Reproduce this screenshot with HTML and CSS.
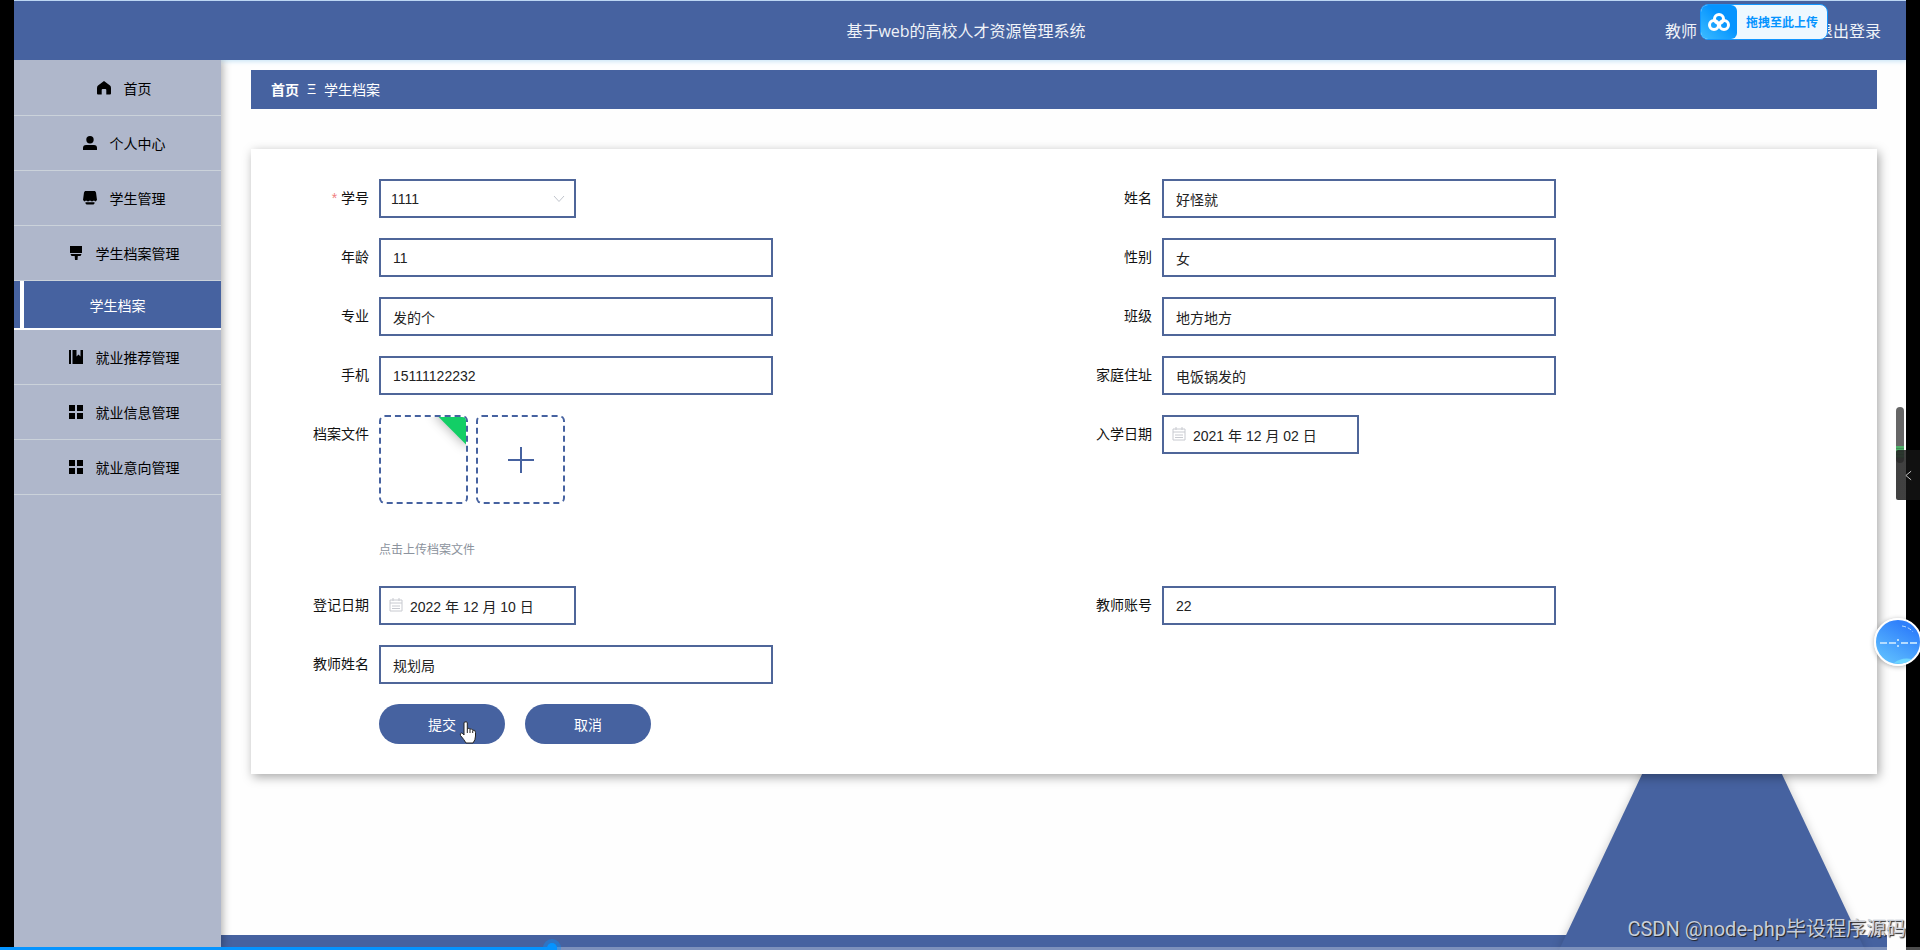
FILE: index.html
```html
<!DOCTYPE html>
<html lang="zh-CN">
	<head>
		<meta charset="UTF-8" />
		<meta name="viewport" content="width=device-width, initial-scale=1.0" />
		<title>基于web的高校人才资源管理系统</title>
		<link rel="stylesheet" href="styles.css">
	</head>
	<body>
		<div class="app">
			<header class="header">
				<h1 class="title">基于web的高校人才资源管理系统</h1>
				<div class="user">
					<span>教师</span>
					<a href="#">退出登录</a>
				</div>
			</header>

			<div class="body">
				<nav class="sidebar">
					<a class="item" href="#">
						<svg class="icon" viewBox="0 0 14 14"><path d="M7 0 L13 4.6 Q14 5.5 14 7 V12.5 Q14 13.5 13 13.5 H9.3 V9 Q9.3 8 8.3 8 H5.7 Q4.7 8 4.7 9 V13.5 H1 Q0 13.5 0 12.5 V7 Q0 5.5 1 4.6 Z" /></svg>
						首页
					</a>
					<a class="item" href="#">
						<svg class="icon" viewBox="0 0 14 14"><circle cx="7" cy="3.7" r="3.7" /><path d="M0 14 V12 Q0 9 3 9 H11 Q14 9 14 12 V14 Z" /></svg>
						个人中心
					</a>
					<a class="item" href="#">
						<svg class="icon" viewBox="0 0 14 14"><path d="M2 0 H12 L13 1.5 L14 9 L12.5 10.500 L11 9.500 L9 10.500 L7 9.500 L5 10.500 L3 9.500 L1.5 10.500 L0 9 L1 1.5 Z M2.500 11.3 H11.500 V12.500 L10.5 13.5 H3.5 L2.500 12.500 Z" /></svg>
						学生管理
					</a>
					<a class="item" href="#">
						<svg class="icon" viewBox="0 0 14 14"><path d="M1 0 H13 V7 H1 Z M1.5 8 H12.5 L11.5 10 H8.8 L8.5 14 H6 L5.7 10 H2.5 Z" /></svg>
						学生档案管理
					</a>
					<a class="subitem" href="#">学生档案</a>
					<a class="item" href="#">
						<svg class="icon" viewBox="0 0 14 14"><path d="M0 0 H2 V14 H0 Z M3.5 0 H7.5 V6.5 L9.5 4.5 L11.5 6.5 V0 H14 V14 H3.5 Z" /></svg>
						就业推荐管理
					</a>
					<a class="item" href="#">
						<svg class="icon" viewBox="0 0 14 14"><path d="M0 0 H6 V6 H0 Z M8 0 H14 V6 H8 Z M0 8 H6 V14 H0 Z M8 8 H14 V14 H8 Z" /></svg>
						就业信息管理
					</a>
					<a class="item" href="#">
						<svg class="icon" viewBox="0 0 14 14"><path d="M0 0 H6 V6 H0 Z M8 0 H14 V6 H8 Z M0 8 H6 V14 H0 Z M8 8 H14 V14 H8 Z" /></svg>
						就业意向管理
					</a>
				</nav>

				<main class="main">
					<div class="breadcrumb">
						<a href="#">首页</a>
						<span>Ξ</span>
						<span>学生档案</span>
					</div>

					<form class="card">
						<div class="field">
							<label for="xuehao"><span class="required">*</span> 学号</label>
							<div class="control short">
								<select id="xuehao" name="xuehao">
									<option>1111</option>
								</select>
								<svg class="arrow" viewBox="0 0 12 8"><path d="M1 1 L6 6.5 L11 1" /></svg>
							</div>
						</div>
						<div class="field">
							<label for="xingming">姓名</label>
							<div class="control"><input type="text" id="xingming" value="好怪就" /></div>
						</div>
						<div class="field">
							<label for="nianling">年龄</label>
							<div class="control"><input type="text" id="nianling" value="11" /></div>
						</div>
						<div class="field">
							<label for="xingbie">性别</label>
							<div class="control"><input type="text" id="xingbie" value="女" /></div>
						</div>
						<div class="field">
							<label for="zhuanye">专业</label>
							<div class="control"><input type="text" id="zhuanye" value="发的个" /></div>
						</div>
						<div class="field">
							<label for="banji">班级</label>
							<div class="control"><input type="text" id="banji" value="地方地方" /></div>
						</div>
						<div class="field">
							<label for="shouji">手机</label>
							<div class="control"><input type="text" id="shouji" value="15111122232" /></div>
						</div>
						<div class="field">
							<label for="zhuzhi">家庭住址</label>
							<div class="control"><input type="text" id="zhuzhi" value="电饭锅发的" /></div>
						</div>
						<div class="field">
							<label for="wenjian">档案文件</label>
							<div class="upload">
								<div class="tiles">
									<div class="tile"><span class="done"></span></div>
									<button type="button" class="tile" id="wenjian" aria-label="上传">
										<svg class="plus" viewBox="0 0 26 26"><path d="M13 0 V26 M0 13 H26" /></svg>
									</button>
								</div>
								<p class="hint">点击上传档案文件</p>
							</div>
						</div>
						<div class="field">
							<label for="ruxue">入学日期</label>
							<div class="control short">
								<svg class="calendar" viewBox="0 0 14 14"><path d="M1 2 H13 V13 H1 Z M1 5 H13 M4 0 V3 M10 0 V3 M3 8 H11 M3 10.5 H11" /></svg>
								<input type="text" class="date" id="ruxue" value="2021 年 12 月 02 日" />
							</div>
						</div>
						<div class="field">
							<label for="dengji">登记日期</label>
							<div class="control short">
								<svg class="calendar" viewBox="0 0 14 14"><path d="M1 2 H13 V13 H1 Z M1 5 H13 M4 0 V3 M10 0 V3 M3 8 H11 M3 10.5 H11" /></svg>
								<input type="text" class="date" id="dengji" value="2022 年 12 月 10 日" />
							</div>
						</div>
						<div class="field">
							<label for="zhanghao">教师账号</label>
							<div class="control"><input type="text" id="zhanghao" value="22" /></div>
						</div>
						<div class="field">
							<label for="jiaoshi">教师姓名</label>
							<div class="control"><input type="text" id="jiaoshi" value="规划局" /></div>
						</div>
						<div class="actions">
							<button type="button" class="btn">
								提交
								<svg class="pointer" viewBox="0 0 18 23"><path d="M6 1 Q8 0 8.3 2 V8 Q10 6.500 11 8.200 Q13 7.200 13.700 9.200 Q16.500 8.500 16.500 11.500 V15 Q16.500 19 14 22 H7 Q5 18.500 1.500 14.500 Q0.500 12.500 2.500 12 Q4 12.200 5 14 V2 Q5 1 6 1 Z" /><path d="M8.300 8 V12 M11 8.500 V12 M13.700 9.500 V12" /></svg>
							</button>
							<button type="button" class="btn">取消</button>
						</div>
					</form>

					<footer class="footer">
						<svg class="triangle" viewBox="0 0 306 324"><path d="M153 0 L306 324 H0 Z" /></svg>
					</footer>
				</main>
			</div>
		</div>

		<!-- floating widgets -->
		<div class="drop-upload">
			<span class="drop-icon">
				<svg viewBox="0 0 22 18"><circle cx="11" cy="6" r="4.500" /><circle cx="6" cy="12" r="4.500" /><circle cx="16" cy="12" r="4.500" /></svg>
			</span>
			<span class="drop-text">拖拽至此上传</span>
		</div>
		<div class="meter"><span></span></div>
		<button type="button" class="drawer" aria-label="展开">
			<svg viewBox="0 0 8 12"><path d="M7 1 L1 6 L7 11" /></svg>
		</button>
		<div class="ball">
			<svg viewBox="0 0 44 44"><path class="dash" d="M4 23 H11 M13 23 H20 M25 23 H32 M34 23 H41" /><path class="dots" d="M21 20 H23 M21 26 H23" /><path class="shine" d="M26 6 Q33 7 37 12" /><path class="wave" d="M18 43 Q25 37 36 39 Q29 45 18 43 Z" /></svg>
		</div>
		<div class="watermark">CSDN @node-php毕设程序源码</div>
		<div class="progress"><div class="played"></div></div>
	</body>
</html>
```

FILE: styles.css
```css
* {
	box-sizing: border-box;
}

body {
	margin: 0;
	padding: 0 14px;
	background-color: #000;
	color: #111;
	font-family: "Liberation Sans", "Noto Sans CJK SC", sans-serif;
	font-size: 14px;
	overflow: hidden;
}

a {
	color: inherit;
	text-decoration: none;
}

.app {
	display: flex;
	flex-direction: column;
	min-height: 100vh;
	background-color: #fefefe;
	overflow: hidden;
}

.header {
	display: grid;
	grid-template-columns: 1fr auto 1fr;
	align-items: center;
	height: 60px;
	padding: 0 25px 2px 37px;
	border-top: 1px solid #bcd6f3;
	background-color: #4662a0;
	box-shadow: 0 1px 5px #bfe0f5;
	color: #f0f3f8;
	font-family: "Open Sans", "Noto Sans CJK SC", sans-serif;
	font-size: 16px;
}

.title {
	grid-column: 2;
	margin: 0;
	font-size: 16px;
	font-weight: normal;
}

.user {
	display: flex;
	justify-content: flex-end;
	gap: 120px;
}

.body {
	display: flex;
	flex: 1;
}

.sidebar {
	position: relative;
	z-index: 1;
	flex: none;
	width: 207px;
	padding-top: 1px;
	background-color: #afb7cb;
	box-shadow: 2px 0 8px rgba(0, 0, 0, 0.3);
	clip-path: inset(0 -12px 0 0);
}

.item {
	display: flex;
	align-items: center;
	justify-content: center;
	height: 55px;
	border-bottom: 1px solid #cbd2da;
	color: #000;
}

.icon {
	width: 14px;
	height: 14px;
	margin: 0 13px;
}

.subitem {
	display: flex;
	align-items: center;
	justify-content: center;
	position: relative;
	height: 49px;
	border-bottom: 2px solid #fff;
	background-color: #4662a0;
	color: #fff;
}

.subitem::before {
	content: "";
	position: absolute;
	top: 0;
	bottom: 0;
	left: 6px;
	width: 4px;
	background-color: #fff;
}

.main {
	display: flex;
	flex-direction: column;
	flex: 1;
	padding-top: 10px;
}

.breadcrumb {
	display: flex;
	align-items: center;
	gap: 8px;
	height: 39px;
	margin: 0 29px 40px 30px;
	padding: 0 20px 2px;
	background-color: #4662a0;
	color: #fff;
}

.breadcrumb a {
	font-weight: bold;
}

.card {
	position: relative;
	z-index: 1;
	display: grid;
	grid-template-columns: 1fr 1fr;
	row-gap: 20px;
	margin: 0 29px 0 30px;
	padding: 30px;
	background-color: #fff;
	box-shadow: 2px 3px 10px rgba(0, 0, 0, 0.35);
}

.field {
	display: flex;
}

.field label {
	flex: none;
	width: 98px;
	padding-right: 10px;
	line-height: 39px;
	text-align: right;
}

.required {
	color: #f08080;
}

.control {
	position: relative;
	width: 394px;
	height: 39px;
}

.control.short {
	width: 197px;
}

.control input,
.control select {
	width: 100%;
	height: 39px;
	padding: 0 12px;
	border: 2px solid #4f6699;
	border-radius: 0;
	background-color: #fff;
	color: #222;
	font-family: inherit;
	font-size: 14px;
	outline: none;
	appearance: none;
}

.control select {
	padding: 0 10px;
}

.control .date {
	padding-left: 29px;
}

.arrow {
	position: absolute;
	top: 16px;
	right: 11px;
	width: 12px;
	height: 8px;
	fill: none;
	stroke: #c0c4cc;
}

.calendar {
	position: absolute;
	top: 12px;
	left: 10px;
	width: 14px;
	height: 14px;
	fill: none;
	stroke: #c8cad0;
}

.tiles {
	display: flex;
	gap: 8px;
}

.tile {
	position: relative;
	display: flex;
	align-items: center;
	justify-content: center;
	width: 89px;
	height: 89px;
	padding: 0;
	border: 2px dashed #4662a0;
	border-radius: 6px;
	background-color: #fff;
	overflow: hidden;
}

/* green corner of an uploaded file */
.done {
	position: absolute;
	top: -10px;
	right: -17px;
	width: 46px;
	height: 26px;
	background-color: #13ce66;
	box-shadow: 0 1px 12px rgba(0, 0, 0, 0.3);
	transform: rotate(45deg);
}

.plus {
	width: 26px;
	height: 26px;
	fill: none;
	stroke: #4662a0;
	stroke-width: 2;
}

.hint {
	margin: 36px 0 0;
	color: #8c939d;
	font-size: 12px;
	line-height: 20px;
	height: 26px;
}

.actions {
	grid-column: 1 / 3;
	display: flex;
	gap: 20px;
	padding-left: 98px;
}

.btn {
	position: relative;
	width: 126px;
	height: 40px;
	padding: 0;
	border: none;
	border-radius: 20px;
	background-color: #4662a0;
	color: #fff;
	font-family: inherit;
	font-size: 14px;
	cursor: pointer;
}

.pointer {
	position: absolute;
	top: 17px;
	left: 80px;
	width: 18px;
	height: 23px;
	fill: #fff;
	stroke: #222;
}

.footer {
	position: relative;
	height: 15px;
	margin: auto 19px 0 0;
	background-color: #4662a0;
}

.triangle {
	position: absolute;
	right: 22px;
	bottom: 0;
	width: 306px;
	height: 324px;
	fill: #4662a0;
	filter: drop-shadow(0 0 5px rgba(0, 0, 0, 0.2));
}

.drop-upload {
	position: absolute;
	z-index: 2;
	top: 4px;
	right: 92px;
	display: flex;
	width: 128px;
	height: 36px;
	border: 1px solid #1296ff;
	border-radius: 8px;
	background-color: #eef8ff;
	overflow: hidden;
}

.drop-icon {
	display: flex;
	align-items: center;
	justify-content: center;
	width: 36px;
	border-radius: 0 6px 6px 0;
	background: linear-gradient(45deg, #3dbcff, #0594ff 60%);
}

.drop-icon svg {
	width: 22px;
	height: 18px;
	fill: none;
	stroke: #fff;
	stroke-width: 3;
}

.drop-text {
	flex: 1;
	color: #0594ff;
	font-size: 12px;
	font-weight: bold;
	line-height: 36px;
	text-align: center;
}

.meter {
	position: absolute;
	z-index: 2;
	top: 407px;
	right: 16px;
	width: 8px;
	height: 56px;
	padding-top: 39px;
	border-radius: 4px;
	background-color: #666;
}

.meter span {
	display: block;
	height: 12px;
	background: repeating-linear-gradient(#4fae68 0 2px, #3f8f55 2px 3px);
}

.drawer {
	position: absolute;
	z-index: 2;
	top: 450px;
	right: 0;
	display: flex;
	align-items: center;
	width: 24px;
	height: 50px;
	padding: 0 0 0 9px;
	border: none;
	border-radius: 2px 0 0 2px;
	background: linear-gradient(90deg, rgba(38, 38, 38, 0.88) 10px, #111 10px);
}

.drawer svg {
	width: 7px;
	height: 11px;
	fill: none;
	stroke: #ddd;
}

.ball {
	position: absolute;
	z-index: 2;
	top: 618px;
	right: -2px;
	width: 48px;
	height: 48px;
	border: 2px solid #fff;
	border-radius: 50%;
	background: linear-gradient(30deg, #66c8ff, #2f80fb 80%);
	box-shadow: 0 1px 5px rgba(0, 0, 0, 0.3);
}

.ball svg {
	display: block;
	width: 44px;
	height: 44px;
	fill: none;
	stroke: #b5dcff;
}

.ball .dash,
.ball .dots {
	stroke-width: 2;
}

.ball .shine {
	stroke-dasharray: 4 2;
}

.ball .wave {
	fill: #6fd6ff;
	stroke: none;
}

.watermark {
	position: absolute;
	z-index: 2;
	right: 14px;
	bottom: 8px;
	color: #c9cfda;
	font-family: Roboto, "Noto Sans CJK SC", sans-serif;
	font-size: 20px;
	line-height: 26px;
	text-shadow: 1px 1px 1px #222;
}

.progress {
	position: absolute;
	z-index: 2;
	left: 0;
	right: 0;
	bottom: 0;
	height: 3px;
	background-color: rgba(255, 255, 255, 0.3);
}

.played {
	position: relative;
	width: 29%;
	height: 3px;
	background-color: #0594ff;
}

.played::after {
	content: "";
	position: absolute;
	top: -4px;
	right: 0;
	width: 10px;
	height: 10px;
	border-radius: 50%;
	background-color: #0594ff;
	box-shadow: 0 0 0 4px rgba(5, 148, 255, 0.4);
}
```
